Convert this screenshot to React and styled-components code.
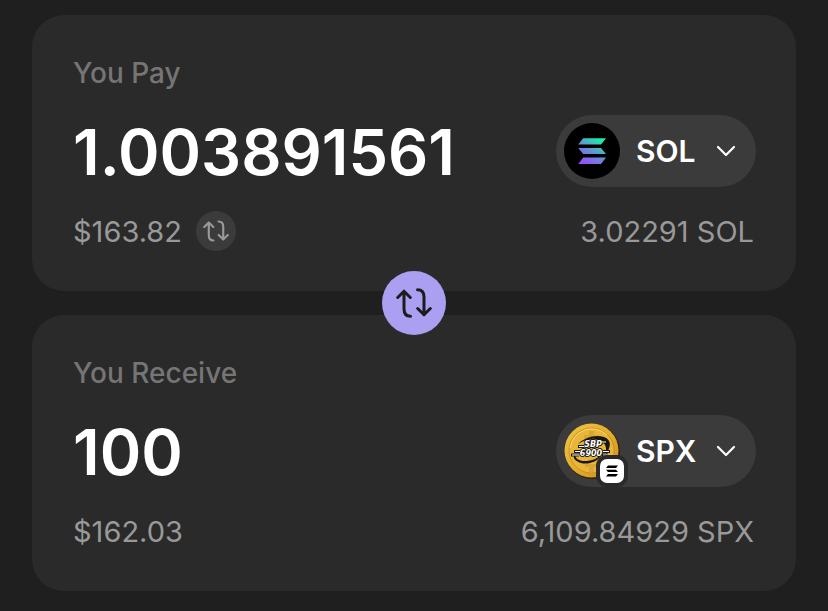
import React, { useId, useState } from "react";
import styled, { createGlobalStyle } from "styled-components";

const GlobalStyle = createGlobalStyle`
  * { box-sizing: border-box; }
  body {
    margin: 0;
    background: #1f1f1f;
    color: #fff;
    font-family: Inter, "Liberation Sans", sans-serif;
  }
  button, input { font: inherit; color: inherit; }
`;

const Page = styled.main`
  display: flex;
  flex-direction: column;
  padding: 15px 32px 20px;
`;

const Card = styled.section`
  display: flex;
  flex-direction: column;
  gap: 24px;
  padding: 40px 40px 40px 41px;
  border-radius: 32px;
  background: #2a2a2a;
`;

const Label = styled.label`
  font-size: 28px;
  font-weight: 500;
  line-height: 36px;
  color: #757575;
`;

const Row = styled.div`
  display: flex;
  align-items: center;
  justify-content: space-between;
  gap: 16px;
`;

const Amount = styled.input`
  flex: 1;
  min-width: 0;
  height: 72px;
  padding: 2px 0 0;
  border: 0;
  outline: 0;
  background: transparent;
  font-size: 63px;
  font-weight: 600;
`;

const TokenButton = styled.button`
  display: flex;
  align-items: center;
  gap: 16px;
  width: 200px;
  height: 72px;
  padding: 0 20px 0 8px;
  border: 0;
  border-radius: 36px;
  background: #3b3b3b;
  font-size: 30px;
  font-weight: 600;
  cursor: pointer;
`;

const TokenName = styled.span`
  flex: 1;
  text-align: left;
`;

const TokenIcon = styled.span`
  position: relative;
  display: flex;
  flex: none;
`;

const NetworkBadge = styled.span`
  position: absolute;
  right: -8px;
  bottom: -8px;
  display: grid;
  place-items: center;
  width: 32px;
  height: 32px;
  border: 4px solid #2a2a2a;
  border-radius: 11px;
  background: #fff;
`;

const Footer = styled(Row)`
  height: 40px;
  padding-right: 2px;
  font-size: 29px;
  color: #999;
`;

const Fiat = styled.div`
  display: flex;
  align-items: center;
  gap: 14px;
`;

const RoundButton = styled.button`
  display: grid;
  place-items: center;
  padding: 0;
  border: 0;
  border-radius: 50%;
  cursor: pointer;
`;

const UnitButton = styled(RoundButton)`
  width: 40px;
  height: 40px;
  background: #3b3b3b;
`;

const SwapButton = styled(RoundButton)`
  z-index: 1;
  align-self: center;
  width: 64px;
  height: 64px;
  margin: -20px 0;
  background: #ab9ff2;
  color: #1c1c1c;
`;

function SwapIcon({ width, height }) {
  return (
    <svg width={width} height={height} viewBox="0 0 36 30" fill="none" stroke="currentColor" strokeWidth="3" strokeLinecap="round" strokeLinejoin="round" aria-hidden="true">
      <path d="M1.7 9.5 8 3.2l6.3 6.3M8 3.2V21q0 7.2 6.5 7.2" />
      <path d="M21.5 1.8Q28 1.8 28 9v17.8M21.7 20.5l6.3 6.3 6.3-6.3" />
    </svg>
  );
}

function Chevron() {
  return (
    <svg width="20" height="12" viewBox="0 0 20 12" fill="none" stroke="currentColor" strokeWidth="2.2" strokeLinecap="round" strokeLinejoin="round" aria-hidden="true">
      <path d="m2 2 8 8 8-8" />
    </svg>
  );
}

function SolIcon() {
  const id = useId();
  return (
    <svg width="56" height="56" viewBox="0 0 56 56" aria-hidden="true">
      <defs>
        <linearGradient id={id} gradientUnits="userSpaceOnUse" x1="18" y1="42" x2="35" y2="16">
          <stop stopColor="#a044ff" />
          <stop offset=".5" stopColor="#688ad8" />
          <stop offset="1" stopColor="#1ceea4" />
        </linearGradient>
      </defs>
      <circle cx="28" cy="28" r="28" />
      <path fill={`url(#${id})`} d="M19.2 15.3H42l-5 6.3H14.2zM14.2 24.9H37l5 6.2H19.2zM19.2 34.6H42l-5 6.3H14.2z" />
    </svg>
  );
}

function SpxIcon() {
  const id = useId();
  return (
    <svg width="56" height="56" viewBox="0 0 56 56" aria-hidden="true">
      <defs>
        <linearGradient id={id} x1="0" y1="0" x2="1" y2="1">
          <stop stopColor="#f2c443" />
          <stop offset=".5" stopColor="#e6ad2c" />
          <stop offset="1" stopColor="#c98c20" />
        </linearGradient>
      </defs>
      <circle cx="28.5" cy="28.5" r="27.5" fill="#33240d" />
      <circle cx="27.5" cy="27.5" r="27" fill={`url(#${id})`} />
      <circle cx="27.5" cy="27.5" r="22.5" fill="#e9b638" stroke="#c8922a" />
      <path d="M6 25A22 22 0 0 1 43 12" fill="none" stroke="#f9dc72" />
      <path d="M25 8h5v4h5v5H20v-5h5zM21 41h14v3h-5v5h-5v-5h-4z" fill="#d9a633" />
      <path d="M14 21c6-6 17-10 26-7 8 3 7 10 2 17 1-9-2-14-11-15-6-1-11 2-17 5z" fill="#191714" />
      <path d="M11 31c0 7 9 9 20 5l7-4c-5 7-14 10-21 8-6-2-9-5-6-9z" fill="#191714" />
      <g fill="#fff" stroke="#191714" strokeWidth="2" paintOrder="stroke" strokeLinejoin="round" fontFamily="DejaVu Sans, sans-serif" fontWeight="700" fontStyle="italic" textAnchor="middle">
        <text x="29" y="24" fontSize="8">SBP</text>
        <text x="27" y="33" fontSize="8">6900</text>
      </g>
      <path d="M7 32h8M38 32h6M10 28.5h6M39 28.5h7M14 23.5h6M38 19h5" stroke="#191714" strokeWidth="3" />
      <path d="M8 32h7M39 32h5M11 28.5h5M39 28.5h6M15 23.5h5M38 19h4" stroke="#fff" strokeWidth="1.2" />
    </svg>
  );
}

function NetworkIcon() {
  return (
    <svg width="12" height="12" viewBox="0 0 12 12" aria-hidden="true">
      <path d="M2 .5h10l-2 2.4H0zM0 4.7h10l2 2.4H2zM2 9h10l-2 2.4H0z" />
    </svg>
  );
}

function SwapPanel({ id, label, initial, symbol, icon, fiat, balance, onUnit }) {
  const [value, setValue] = useState(initial);
  return (
    <Card>
      <Label htmlFor={id}>{label}</Label>
      <Row>
        <Amount id={id} inputMode="decimal" value={value} onChange={(e) => setValue(e.target.value)} />
        <TokenButton type="button" aria-haspopup="listbox">
          <TokenIcon>{icon}</TokenIcon>
          <TokenName>{symbol}</TokenName>
          <Chevron />
        </TokenButton>
      </Row>
      <Footer>
        <Fiat>
          <span>{fiat}</span>
          {onUnit && (
            <UnitButton type="button" aria-label="Switch currency" onClick={onUnit}>
              <SwapIcon width={26} height={22} />
            </UnitButton>
          )}
        </Fiat>
        <span>{balance}</span>
      </Footer>
    </Card>
  );
}

export default function App() {
  return (
    <>
      <GlobalStyle />
      <Page>
        <SwapPanel id="pay" label="You Pay" initial="1.003891561" symbol="SOL" icon={<SolIcon />} fiat="$163.82" balance="3.02291 SOL" onUnit={() => {}} />
        <SwapButton type="button" aria-label="Swap tokens">
          <SwapIcon width={36} height={30} />
        </SwapButton>
        <SwapPanel
          id="receive"
          label="You Receive"
          initial="100"
          symbol="SPX"
          icon={<><SpxIcon /><NetworkBadge><NetworkIcon /></NetworkBadge></>}
          fiat="$162.03"
          balance="6,109.84929 SPX"
        />
      </Page>
    </>
  );
}
